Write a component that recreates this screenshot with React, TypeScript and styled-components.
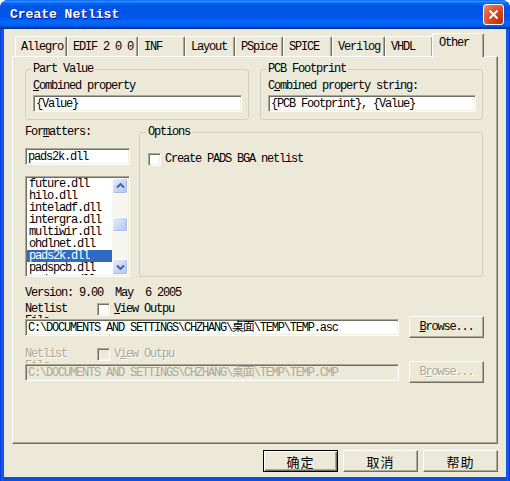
import React from "react";
import styled, { createGlobalStyle } from "styled-components";

const GlobalStyle = createGlobalStyle`
  html, body { margin: 0; padding: 0; background: #fff; }
  body {
    font-family: "Liberation Mono", "Noto Sans CJK SC", monospace;
    font-size: 12px;
    letter-spacing: -1.2px;
    color: #000;
  }
  * { box-sizing: border-box; }
`;

const Window = styled.div`
  width: 510px;
  height: 481px;
  display: flex;
  flex-direction: column;
  background: linear-gradient(to right, #0831D9 0, #1660EA 2px, #0A4FDE 4px, #0A4FDE 506px, #1660EA 508px, #0831D9 510px);
  border-radius: 8px 8px 0 0;
  overflow: hidden;
`;

const TitleBar = styled.div`
  height: 29px;
  flex: none;
  display: flex;
  align-items: center;
  justify-content: space-between;
  padding: 0 6px 0 10px;
  background: linear-gradient(180deg, #0058EE 0%, #3593FF 4%, #288EFF 6%, #127DFF 8%, #036FFC 10%, #0262EE 14%, #0057E5 20%, #0054E3 24%, #0055EB 56%, #005BF5 66%, #026AFE 76%, #0062EF 86%, #0052D6 92%, #0040AB 94%, #003092 100%);
`;

const TitleText = styled.div`
  font-family: "Liberation Mono", monospace;
  font-weight: bold;
  font-size: 13px;
  letter-spacing: 0;
  color: #fff;
  text-shadow: 1px 1px #0F1089;
`;

const CloseButton = styled.div`
  width: 21px;
  height: 21px;
  border: 1px solid #fff;
  border-radius: 3px;
  background: radial-gradient(circle at 85% 85%, #C1330C 0%, #D9461B 45%, #E47252 80%, #F0A48E 100%);
  display: flex;
  align-items: center;
  justify-content: center;
`;

const Client = styled.div`
  flex: 1;
  margin: 0 4px 4px;
  background: #ECE9D8;
  display: flex;
  flex-direction: column;
  padding: 4px 8px 0;
`;

const TabStrip = styled.div`
  height: 23px;
  flex: none;
  display: flex;
  align-items: flex-end;
  padding-left: 3px;
  position: relative;
  z-index: 1;
`;

const Tab = styled.div<{ $w: number; $active?: boolean }>`
  width: ${p => p.$w}px;
  height: ${p => (p.$active ? 24 : 20)}px;
  margin-bottom: ${p => (p.$active ? -1 : 0)}px;
  margin-left: ${p => (p.$active ? -1 : 0)}px;
  padding: ${p => (p.$active ? "3px 0 0 6px" : "4px 0 0 5px")};
  background: #ECE9D8;
  border-top: 1px solid #fff;
  border-left: 1px solid #fff;
  border-right: 1px solid #716F64;
  border-radius: 2px 2px 0 0;
  box-shadow: inset -1px 0 #ACA899;
  white-space: pre;
  line-height: 13px;
`;

const Panel = styled.div`
  height: 388px;
  flex: none;
  border: 1px solid;
  border-color: #fff #716F64 #716F64 #fff;
  box-shadow: inset -1px -1px #ACA899;
  padding: 6px 14px 0 12px;
  display: flex;
  flex-direction: column;
`;

const GroupRow = styled.div`
  display: grid;
  grid-template-columns: 224px 223px;
  column-gap: 11px;
`;

const Group = styled.fieldset`
  margin: 0;
  min-width: 0;
  padding: 0 6px 7px 7px;
  border: 1px solid #D0D0BF;
  border-radius: 3px;
  display: flex;
  flex-direction: column;
`;

const Legend = styled.legend<{ $shift?: number }>`
  padding: 0 2px;
  margin-left: ${p => p.$shift ?? -2}px;
  line-height: 13px;
`;

const FieldLabel = styled.div<{ $gap?: number }>`
  line-height: 13px;
  margin-top: ${p => p.$gap ?? 4}px;
  white-space: pre;
`;

const TextBox = styled.div<{ $disabled?: boolean; $w?: number }>`
  width: ${p => (p.$w ? `${p.$w}px` : "100%")};
  flex: none;
  height: 17px;
  margin-top: 2px;
  padding: 2px 2px 0;
  line-height: 13px;
  white-space: pre;
  overflow: hidden;
  background: ${p => (p.$disabled ? "#ECE9D8" : "#fff")};
  color: ${p => (p.$disabled ? "#ACA899" : "#000")};
  border: 1px solid;
  border-color: #ACA899 #fff #fff #ACA899;
  box-shadow: inset 1px 1px #716F64, inset -1px -1px #F1EFE2;
`;

const MidRow = styled.div`
  display: grid;
  grid-template-columns: 105px 1fr;
  column-gap: 9px;
  margin-top: 6px;
`;

const Column = styled.div`
  display: flex;
  flex-direction: column;
`;

const ListBox = styled.div`
  height: 101px;
  margin-top: 11px;
  display: flex;
  background: #fff;
  border: 1px solid;
  border-color: #ACA899 #fff #fff #ACA899;
  box-shadow: inset 1px 1px #716F64, inset -1px -1px #F1EFE2;
  padding: 1px;
`;

const ListItems = styled.div`
  flex: 1;
  overflow: hidden;
`;

const ListItem = styled.div<{ $selected?: boolean }>`
  height: 12px;
  line-height: 12px;
  padding-left: 2px;
  white-space: nowrap;
  background: ${p => (p.$selected ? "#316AC5" : "transparent")};
  color: ${p => (p.$selected ? "#fff" : "#000")};
`;

const ScrollBar = styled.div`
  width: 16px;
  flex: none;
  display: flex;
  flex-direction: column;
  background: #F6F5EF;
`;

const ScrollButton = styled.div<{ $h?: number; $top?: number }>`
  width: 16px;
  height: ${p => p.$h ?? 16}px;
  margin-top: ${p => p.$top ?? 0}px;
  border: 1px solid #fff;
  border-radius: 2px;
  background: linear-gradient(135deg, #E6EEFD 0%, #C8D7FA 50%, #B3C8F5 100%);
  box-shadow: inset -1px -1px #A5BAEA;
  display: flex;
  align-items: center;
  justify-content: center;
`;

const Filler = styled.div`
  flex: 1;
`;

const CheckRow = styled.div<{ $top?: number; $disabled?: boolean }>`
  display: flex;
  align-items: center;
  gap: 4px;
  margin-top: ${p => p.$top ?? 0}px;
  line-height: 13px;
  color: ${p => (p.$disabled ? "#ACA899" : "#000")};
`;

const CheckBox = styled.div<{ $disabled?: boolean }>`
  width: 13px;
  height: 13px;
  flex: none;
  background: ${p => (p.$disabled ? "#ECE9D8" : "#fff")};
  border: 1px solid;
  border-color: #ACA899 #fff #fff #ACA899;
  box-shadow: inset 1px 1px #716F64, inset -1px -1px #F1EFE2;
`;

const Version = styled.div`
  margin-top: 10px;
  line-height: 13px;
  white-space: pre;
`;

const NetRow = styled.div<{ $top: number; $disabled?: boolean }>`
  display: flex;
  align-items: flex-start;
  height: 13px;
  margin-top: ${p => p.$top}px;
  color: ${p => (p.$disabled ? "#ACA899" : "#000")};
  text-shadow: ${p => (p.$disabled ? "1px 1px #fff" : "none")};
`;

const NetLabel = styled.div`
  width: 72px;
  height: 15px;
  flex: none;
  overflow: hidden;
  line-height: 12px;
  white-space: pre;
`;

const PathRow = styled.div`
  display: flex;
  align-items: center;
  gap: 10px;
  height: 22px;
`;

const PushButton = styled.div<{ $disabled?: boolean; $default?: boolean }>`
  width: 75px;
  height: 22px;
  flex: none;
  display: flex;
  align-items: center;
  justify-content: center;
  background: #ECE9D8;
  color: ${p => (p.$disabled ? "#ACA899" : "#000")};
  text-shadow: ${p => (p.$disabled ? "1px 1px #fff" : "none")};
  border: 1px solid;
  border-color: ${p => (p.$default ? "#000" : "#fff #716F64 #716F64 #fff")};
  box-shadow: ${p =>
    p.$default
      ? "inset 1px 1px #fff, inset -1px -1px #716F64, inset -2px -2px #ACA899"
      : "inset -1px -1px #ACA899"};
`;

const ButtonRow = styled.div`
  display: flex;
  justify-content: flex-end;
  gap: 5px;
  margin-top: 6px;
`;

const CjkLabel = styled.span`
  font-family: "Noto Sans CJK SC", sans-serif;
  font-size: 13px;
  letter-spacing: 1px;
`;

const Arrow = ({ down }: { down?: boolean }) => (
  <svg width="9" height="6" viewBox="0 0 9 6">
    <path
      d={down ? "M1 1.5 L4.5 5 L8 1.5" : "M1 4.5 L4.5 1 L8 4.5"}
      fill="none"
      stroke="#4D6185"
      strokeWidth="2"
    />
  </svg>
);

const tabs: [string, number][] = [
  ["Allegro", 52],
  ["EDIF 2 0 0", 71],
  ["INF", 47],
  ["Layout", 50],
  ["PSpice", 48],
  ["SPICE", 49],
  ["Verilog", 53],
  ["VHDL", 48],
];

const formatters = [
  "future.dll",
  "hilo.dll",
  "inteladf.dll",
  "intergra.dll",
  "multiwir.dll",
  "ohdlnet.dll",
  "pads2k.dll",
  "padspcb.dll",
  "padspwr.dll",
];

export default function App() {
  return (
    <>
      <GlobalStyle />
      <Window>
        <TitleBar>
          <TitleText>Create Netlist</TitleText>
          <CloseButton>
            <svg width="11" height="11" viewBox="0 0 11 11">
              <path d="M1.5 1.5 L9.5 9.5 M9.5 1.5 L1.5 9.5" stroke="#fff" strokeWidth="2" />
            </svg>
          </CloseButton>
        </TitleBar>
        <Client>
          <TabStrip>
            {tabs.map(([name, w]) => (
              <Tab key={name} $w={w}>{name}</Tab>
            ))}
            <Tab $w={52} $active>Other</Tab>
          </TabStrip>
          <Panel>
            <GroupRow>
              <Group>
                <Legend>Part Value</Legend>
                <FieldLabel><u>C</u>ombined property</FieldLabel>
                <TextBox>{"{Value}"}</TextBox>
              </Group>
              <Group>
                <Legend>PCB Footprint</Legend>
                <FieldLabel>C<u>o</u>mbined property string:</FieldLabel>
                <TextBox>{"{PCB Footprint}, {Value}"}</TextBox>
              </Group>
            </GroupRow>
            <MidRow>
              <Column>
                <FieldLabel $gap={0}>For<u>m</u>atters:</FieldLabel>
                <TextBox style={{ marginTop: 9 }}>pads2k.dll</TextBox>
                <ListBox>
                  <ListItems>
                    {formatters.map(f => (
                      <ListItem key={f} $selected={f === "pads2k.dll"}>{f}</ListItem>
                    ))}
                  </ListItems>
                  <ScrollBar>
                    <ScrollButton><Arrow /></ScrollButton>
                    <ScrollButton $h={15} $top={23} />
                    <Filler />
                    <ScrollButton><Arrow down /></ScrollButton>
                  </ScrollBar>
                </ListBox>
              </Column>
              <Group>
                <Legend $shift={-1}>Options</Legend>
                <CheckRow $top={14} style={{ marginLeft: 1 }}>
                  <CheckBox />
                  <span>Create PADS BGA netlist</span>
                </CheckRow>
              </Group>
            </MidRow>
            <Version>Version: 9.00  May  6 2005</Version>
            <NetRow $top={3}>
              <NetLabel>{"Netlist\nFile"}</NetLabel>
              <CheckRow>
                <CheckBox />
                <span><u>V</u>iew Outpu</span>
              </CheckRow>
            </NetRow>
            <PathRow>
              <TextBox $w={374} style={{ marginTop: 0 }}>C:\DOCUMENTS AND SETTINGS\CHZHANG\桌面\TEMP\TEMP.asc</TextBox>
              <PushButton><span><u>B</u>rowse...</span></PushButton>
            </PathRow>
            <NetRow $top={10} $disabled>
              <NetLabel>{"Netlist\nFile"}</NetLabel>
              <CheckRow $disabled>
                <CheckBox $disabled />
                <span>V<u>i</u>ew Outpu</span>
              </CheckRow>
            </NetRow>
            <PathRow>
              <TextBox $w={374} $disabled style={{ marginTop: 0 }}>C:\DOCUMENTS AND SETTINGS\CHZHANG\桌面\TEMP\TEMP.CMP</TextBox>
              <PushButton $disabled><span>B<u>r</u>owse...</span></PushButton>
            </PathRow>
          </Panel>
          <ButtonRow>
            <PushButton $default><CjkLabel>确定</CjkLabel></PushButton>
            <PushButton><CjkLabel>取消</CjkLabel></PushButton>
            <PushButton><CjkLabel>帮助</CjkLabel></PushButton>
          </ButtonRow>
        </Client>
      </Window>
    </>
  );
}
